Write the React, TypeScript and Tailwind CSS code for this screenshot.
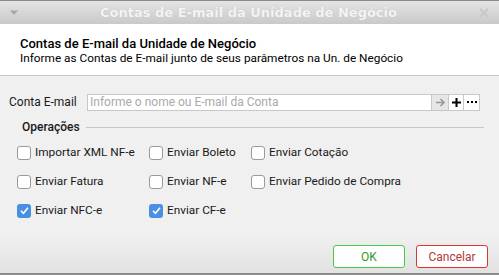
import React from "react";

const ops = [
  [
    { label: "Importar XML NF-e", checked: false },
    { label: "Enviar Boleto", checked: false },
    { label: "Enviar Cotação", checked: false },
  ],
  [
    { label: "Enviar Fatura", checked: false },
    { label: "Enviar NF-e", checked: false },
    { label: "Enviar Pedido de Compra", checked: false },
  ],
  [
    { label: "Enviar NFC-e", checked: true },
    { label: "Enviar CF-e", checked: true },
  ],
];

function Check({ label, checked }: { label: string; checked: boolean }) {
  return (
    <label className="flex items-center gap-[4px]">
      {checked ? (
        <span className="flex h-[14px] w-[14px] items-center justify-center rounded-[3px] bg-[#4a90e2]">
          <svg width="11" height="11" viewBox="0 0 11 11">
            <path d="M2 5.8 L4.4 8.2 L9 2.8" fill="none" stroke="white" strokeWidth="1.6" />
          </svg>
        </span>
      ) : (
        <span className="h-[14px] w-[14px] rounded-[3px] border border-[#9a9a9a] bg-white" />
      )}
      <span className="text-[11.8px]">{label}</span>
    </label>
  );
}

export default function App() {
  return (
    <div
      className="flex h-[275px] w-[499px] flex-col overflow-hidden bg-[#f0f0f0] text-[12px] text-[#1a1a1a]"
      style={{ fontFamily: "Roboto, 'Noto Sans', sans-serif" }}
    >
      <div className="flex h-[24px] items-center justify-between border-t border-[#8a8a8a] bg-gradient-to-b from-[#e4e4e4] to-[#c9c9c9] px-[9px]">
        <svg width="10" height="6" viewBox="0 0 10 6">
          <path d="M1 0.5 L9 0.5 L5 5 Z" fill="#a8a8a8" />
        </svg>
        <span className="text-[13px] font-bold text-[#f4f4f4] [text-shadow:0_0_1px_#b8b8b8]" style={{ fontFamily: "'DejaVu Sans', sans-serif" }}>
          Contas de E-mail da Unidade de Negócio
        </span>
        <svg width="12" height="12" viewBox="0 0 12 12">
          <path d="M2 2 L10 10 M10 2 L2 10" stroke="#c8c8c8" strokeWidth="2" />
        </svg>
      </div>

      <div className="h-[52px] border-b border-[#c8c8c8] bg-white px-[20px] pt-[12px] leading-[15px]">
        <div className="text-[13px] font-medium text-black">Contas de E-mail da Unidade de Negócio</div>
        <div className="text-[11.8px] text-black">Informe as Contas de E-mail junto de seus parâmetros na Un. de Negócio</div>
      </div>

      <div className="flex-1 px-[9px] pt-[17px]">
        <div className="flex items-center">
          <span className="w-[78px]">Conta E-mail</span>
          <div className="flex h-[17px] flex-1 items-center border border-[#c8c8c8] bg-white pl-[2px] text-[#aaaaaa]">
            Informe o nome ou E-mail da Conta
          </div>
          <div className="flex h-[17px] w-[16px] items-center justify-center border-y border-[#c8c8c8] bg-[#e6e6e6]">
            <svg width="11" height="9" viewBox="0 0 11 9">
              <path d="M1 4.5 H9 M5.5 1 L9 4.5 L5.5 8" fill="none" stroke="#999" strokeWidth="1.6" />
            </svg>
          </div>
          <div className="flex h-[17px] w-[16px] items-center justify-center border border-[#c8c8c8] bg-white">
            <svg width="11" height="11" viewBox="0 0 11 11">
              <path d="M5.5 1 V10 M1 5.5 H10" stroke="#000" strokeWidth="2" />
            </svg>
          </div>
          <div className="flex h-[17px] w-[16px] items-center justify-center gap-[2px] border-y border-r border-[#c8c8c8] bg-white">
            <span className="h-[2px] w-[2px] bg-black" />
            <span className="h-[2px] w-[2px] bg-black" />
            <span className="h-[2px] w-[2px] bg-black" />
          </div>
          <div className="w-[10px]" />
        </div>

        <div className="mt-[7px] flex items-center pl-[13px]">
          <span className="text-[12px] font-medium">Operações</span>
          <div className="ml-[6px] mr-[6px] h-px flex-1 bg-[#c8c8c8]" />
        </div>

        <div className="mt-[8px] flex flex-col gap-[15px] pl-[8px]">
          {ops.map((row, i) => (
            <div key={i} className="grid h-[14px] grid-cols-[132px_102px_1fr] items-center">
              {row.map((c) => (
                <Check key={c.label} label={c.label} checked={c.checked} />
              ))}
            </div>
          ))}
        </div>
      </div>

      <div className="flex h-[38px] items-start justify-end gap-[11px] bg-gradient-to-b from-[#f0f0f0] to-[#e2e2e2] pr-[11px] pt-[10px]">
        <button className="h-[23px] w-[72px] rounded-[3px] border border-[#44cc44] bg-white text-[12px] text-[#2d9a2d]">OK</button>
        <button className="h-[23px] w-[72px] rounded-[3px] border border-[#dd3333] bg-white text-[12px] text-[#b03a3a]">Cancelar</button>
      </div>
      <div className="h-[2px] bg-[#8c8c8c]" />
    </div>
  );
}
